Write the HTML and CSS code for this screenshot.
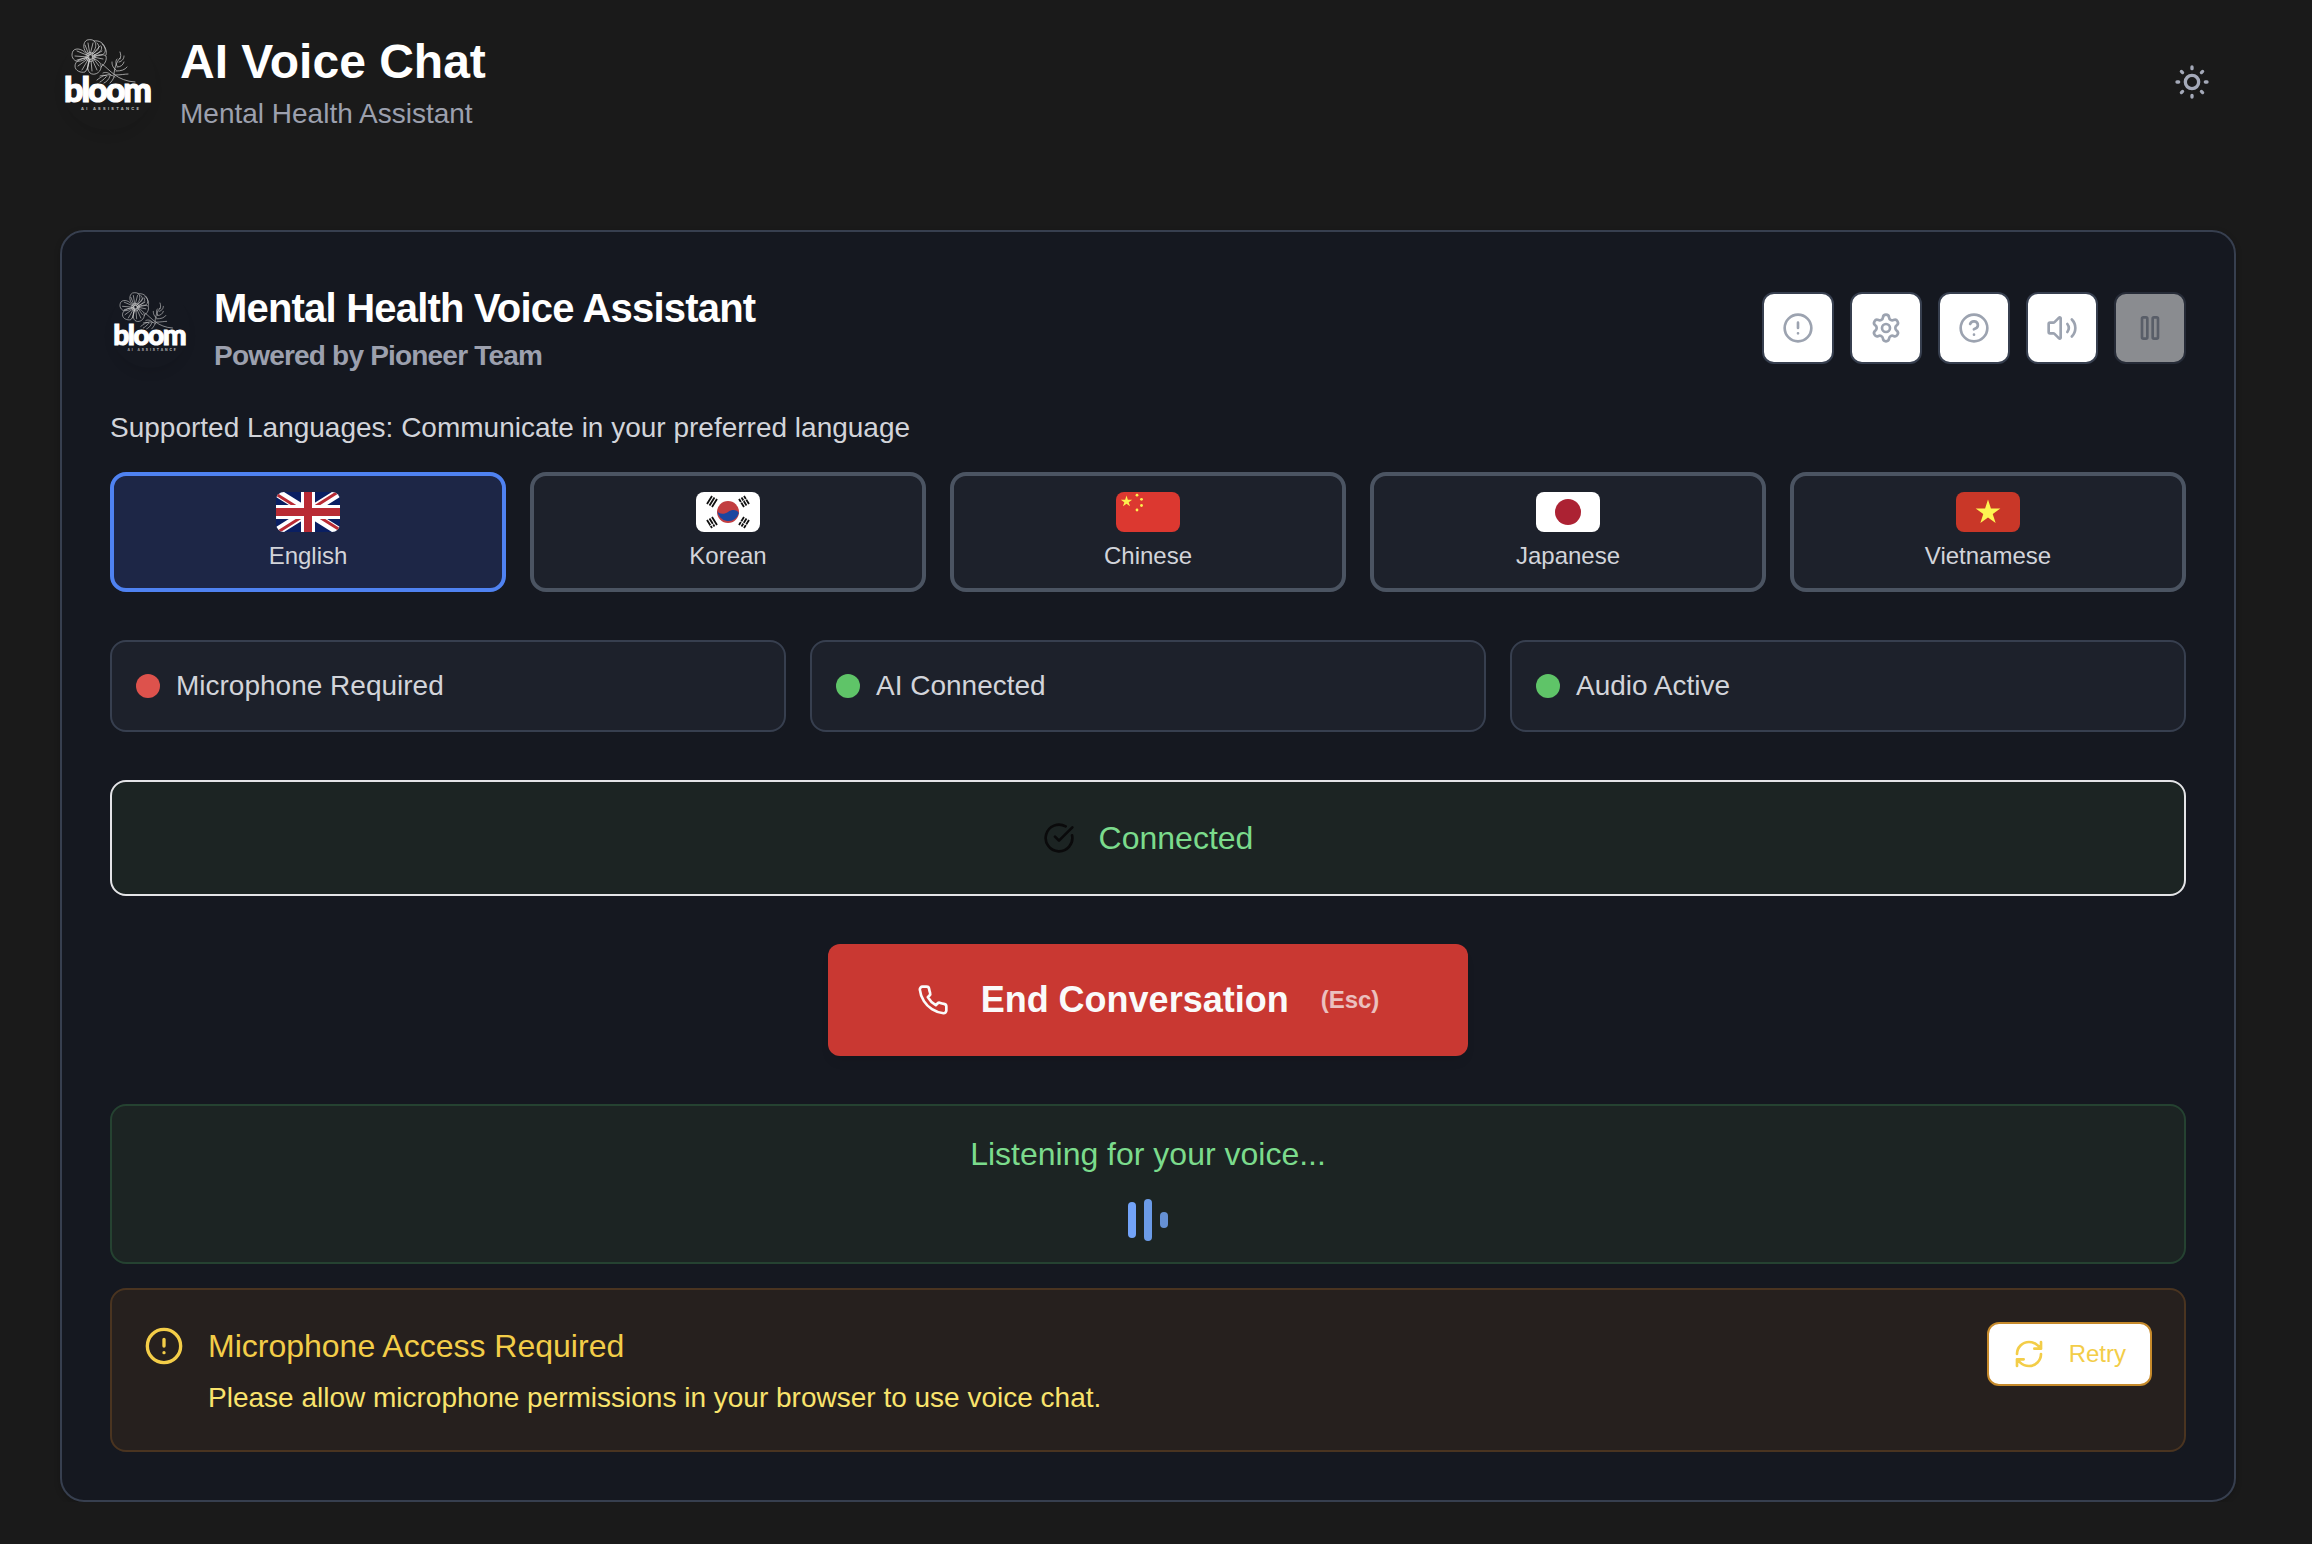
FILE: index.html
```
<!DOCTYPE html>
<html lang="en">
<head>
    <meta charset="UTF-8">
    <meta name="viewport" content="width=device-width, initial-scale=1.0">
    <title>AI Voice Chat</title>
    <link rel="stylesheet" href="styles.css">
</head>
<body>
    <!-- shared icons -->
    <svg class="defs" width="0" height="0">
        <symbol id="flower" viewBox="0 0 96 96">
            <g fill="none" stroke="#d6d6d6" stroke-width="0.7" stroke-linecap="round">
                <path d="M28 20C22 16 23 8 27 6c4-1 7 0 8 2 2 4 0 9-4 12"/>
                <path d="M34 7c5-1 10 2 11 7 1 4-1 6-3 7-4 1-8 1-10 1"/>
                <path d="M37 9c3 3 3 7-5 11M41 12c2 3 0 6-7 9M42 10c4 4 5 7 4 11"/>
                <path d="M28 22c-4-7-12-9-15-5-2 4-1 8 3 10 4 1 9-1 12-4"/>
                <path d="M28 24c-7 0-13 3-13 8 0 5 6 7 10 6 3-3 4-9 4-13"/>
                <path d="M30 25c-3 5-3 11 0 14 4 3 10 0 11-5 1-5-3-8-9-10"/>
                <path d="M34 23c4-3 9-3 12-1 1 4-1 8-5 11"/>
                <path d="M30 21L28 9M30 21l3-12M29 21l-4-10M29 22l-12-5M28 23l-13-1M28 23l-11 3M29 24l-11 8M29 24l-7 12M30 25l-3 11M31 26l1 11M32 25l5 11M33 24l6 8M32 21l8-9M33 22l9-5M33 23l10 2"/>
                <circle cx="30.500" cy="23" r="2.500"/>
                <circle cx="30.500" cy="23" r="4.500" stroke-dasharray="1 1"/>
                <path d="M42 30c8 6 15 17 33 18"/>
                <path d="M54 41c0-5 2-13 6-17M56 36c-4-3-4-6-4-8M57 32c-2-3-1-6 0-7M57 33c4 0 6-2 7-5M56 37c5 0 9-1 11-4M55 41c6 0 10-1 13-1M60 25c1-3 1-4 0-7M59 28c4-1 5-4 5-6"/>
                <path d="M55 43c-7-5-13-1-18 3M51 41c-3-3-6-3-8-2M47 42c-3-1-5-1-7 0M50 42c-1 4-4 6-6 7M54 43c-1 3-3 5-4 6M46 43c-2 2-4 4-6 5"/>
            </g>
        </symbol>
        <symbol id="alert" viewBox="0 0 24 24">
            <circle cx="12" cy="12" r="10"/><path d="M12 8v4M12 16h.01"/>
        </symbol>
    </svg>

    <header class="top-bar">
        <div class="brand">
            <svg class="logo" viewBox="0 0 96 96">
                <use href="#flower"/>
                <text class="logo-word" x="4" y="68" textLength="88">bloom</text>
                <text class="logo-tag" x="21" y="76" textLength="58">AI ASSISTANCE</text>
            </svg>
            <div class="brand-text">
                <h1>AI Voice Chat</h1>
                <p class="tagline">Mental Health Assistant</p>
            </div>
        </div>
        <svg class="icon theme-icon" viewBox="0 0 24 24"><circle cx="12" cy="12" r="4"/><path d="M12 3v1M12 20v1M3 12h1M20 12h1M18.364 5.636l-.707.707M6.343 17.657l-.707.707M5.636 5.636l.707.707M17.657 17.657l.707.707"/></svg>
    </header>

    <main class="card">
        <div class="card-header">
            <div class="brand">
                <svg class="logo small" viewBox="0 0 96 96">
                    <use href="#flower"/>
                    <text class="logo-word" x="4" y="68" textLength="88">bloom</text>
                    <text class="logo-tag" x="21" y="76" textLength="58">AI ASSISTANCE</text>
                </svg>
                <div>
                    <h2>Mental Health Voice Assistant</h2>
                    <p class="powered">Powered by Pioneer Team</p>
                </div>
            </div>
            <div class="tools">
                <button class="tool"><svg class="icon"><use href="#alert"/></svg></button>
                <button class="tool"><svg class="icon" viewBox="0 0 24 24"><path d="M9.671 4.136a2.34 2.34 0 0 1 4.659 0 2.34 2.34 0 0 0 3.319 1.915 2.34 2.34 0 0 1 2.33 4.033 2.34 2.34 0 0 0 0 3.831 2.34 2.34 0 0 1-2.33 4.033 2.34 2.34 0 0 0-3.319 1.915 2.34 2.34 0 0 1-4.659 0 2.34 2.34 0 0 0-3.32-1.915 2.34 2.34 0 0 1-2.33-4.033 2.34 2.34 0 0 0 0-3.831A2.34 2.34 0 0 1 6.35 6.051a2.34 2.34 0 0 0 3.319-1.915"/><circle cx="12" cy="12" r="3"/></svg></button>
                <button class="tool"><svg class="icon" viewBox="0 0 24 24"><circle cx="12" cy="12" r="10"/><path d="M9.090 9a3 3 0 0 1 5.830 1c0 2-3 3-3 3M12 17h.01"/></svg></button>
                <button class="tool"><svg class="icon" viewBox="0 0 24 24"><path d="M11 4.702a.705.705 0 0 0-1.203-.498L6.413 7.587A1.400 1.400 0 0 1 5.416 8H3a1 1 0 0 0-1 1v6a1 1 0 0 0 1 1h2.416a1.400 1.400 0 0 1 .997.413l3.383 3.384A.705.705 0 0 0 11 19.298z"/><path d="M16 9a5 5 0 0 1 0 6M19.364 18.364a9 9 0 0 0 0-12.728"/></svg></button>
                <button class="tool" disabled><svg class="icon" viewBox="0 0 24 24"><rect x="14" y="4" width="4" height="16" rx="1"/><rect x="6" y="4" width="4" height="16" rx="1"/></svg></button>
            </div>
        </div>

        <p class="supported">Supported Languages: Communicate in your preferred language</p>
        <div class="languages">
            <button class="language active">
                <svg class="flag" viewBox="0 0 64 40">
                    <rect width="64" height="40" fill="#0a1f62"/>
                    <path d="M0 0l64 40M64 0L0 40" stroke="#fff" stroke-width="8.500"/>
                    <path d="M0 2l27 16.900M64 38L37 21.100M62 0L36 16.500M2 40l26-16.500" stroke="#b92b34" stroke-width="3"/>
                    <path d="M32 0v40M0 20h64" stroke="#fff" stroke-width="14"/>
                    <path d="M32 0v40M0 20h64" stroke="#b92b34" stroke-width="8"/>
                </svg>
                <span>English</span>
            </button>
            <button class="language">
                <svg class="flag" viewBox="0 0 64 40">
                    <rect width="64" height="40" fill="#fff"/>
                    <circle cx="32" cy="20" r="11" fill="#c23e41"/>
                    <path d="M21.300 18.500C22 22 28 23 32 20S41 17.500 42.900 21A11 11 0 0 1 21.300 18.500z" fill="#1c46a0"/>
                    <g stroke="#111" stroke-width="1.800">
                        <path d="M11 12l5-8M13.500 13.500l5-8M16 15l5-8"/>
                        <path d="M53 12l-5-8M50.500 13.500l-5-8M48 15l-5-8"/>
                        <path d="M11 28l5 8M13.500 26.500l5 8M16 25l5 8"/>
                        <path d="M53 28l-5 8M50.500 26.500l-5 8M48 25l-5 8"/>
                    </g>
                    <path d="M44 11l4-2.500M49 8l3-2M14 34l4-2.500M44 29l8 5" stroke="#fff" stroke-width="0.900"/>
                </svg>
                <span>Korean</span>
            </button>
            <button class="language">
                <svg class="flag" viewBox="0 0 64 40">
                    <rect width="64" height="40" fill="#dc3830"/>
                    <g fill="#fdf04f">
                        <path d="M10.500 3.500l1.350 4.150h4.360l-3.530 2.560 1.350 4.150-3.530-2.560-3.530 2.560 1.350-4.150-3.530-2.560h4.360z"/>
                        <circle cx="21" cy="3.200" r="1.400"/><circle cx="25.500" cy="7.300" r="1.400"/><circle cx="25.500" cy="13.500" r="1.400"/><circle cx="21" cy="18" r="1.400"/>
                    </g>
                </svg>
                <span>Chinese</span>
            </button>
            <button class="language">
                <svg class="flag" viewBox="0 0 64 40">
                    <rect width="64" height="40" fill="#fff"/>
                    <circle cx="32" cy="20" r="13" fill="#ac2233"/>
                </svg>
                <span>Japanese</span>
            </button>
            <button class="language">
                <svg class="flag" viewBox="0 0 64 40">
                    <rect width="64" height="40" fill="#c93728"/>
                    <path d="M32 7.500l2.920 8.980h9.440l-7.640 5.550 2.920 8.980L32 25.460l-7.640 5.550 2.920-8.980-7.640-5.550h9.440z" fill="#fdf551"/>
                </svg>
                <span>Vietnamese</span>
            </button>
        </div>

        <div class="statuses">
            <div class="status"><span class="dot red"></span>Microphone Required</div>
            <div class="status"><span class="dot"></span>AI Connected</div>
            <div class="status"><span class="dot"></span>Audio Active</div>
        </div>

        <div class="connected">
            <svg class="icon" viewBox="0 0 24 24"><path d="M21.801 10A10 10 0 1 1 17 3.335M9 11l3 3L22 4"/></svg>
            <span>Connected</span>
        </div>

        <button class="end-btn">
            <svg class="icon" viewBox="0 0 24 24"><path d="M22 16.920v3a2 2 0 0 1-2.180 2 19.790 19.790 0 0 1-8.630-3.070 19.500 19.500 0 0 1-6-6 19.790 19.790 0 0 1-3.070-8.670A2 2 0 0 1 4.110 2h3a2 2 0 0 1 2 1.720 12.840 12.840 0 0 0 .7 2.810 2 2 0 0 1-.45 2.110L8.090 9.910a16 16 0 0 0 6 6l1.270-1.270a2 2 0 0 1 2.110-.45 12.840 12.840 0 0 0 2.810.7A2 2 0 0 1 22 16.920z"/></svg>
            <span>End Conversation</span>
            <span class="key">(Esc)</span>
        </button>

        <div class="listening">
            <p>Listening for your voice...</p>
            <div class="bars">
                <span class="bar one"></span>
                <span class="bar two"></span>
                <span class="bar three"></span>
            </div>
        </div>

        <div class="warning">
            <svg class="icon warning-icon"><use href="#alert"/></svg>
            <div class="warning-text">
                <h3>Microphone Access Required</h3>
                <p>Please allow microphone permissions in your browser to use voice chat.</p>
            </div>
            <button class="retry">
                <svg class="icon" viewBox="0 0 24 24"><path d="M3 12a9 9 0 0 1 9-9 9.750 9.750 0 0 1 6.740 2.740L21 8M21 3v5h-5M21 12a9 9 0 0 1-9 9 9.750 9.750 0 0 1-6.740-2.740L3 16M8 16H3v5"/></svg>
                <span>Retry</span>
            </button>
        </div>
    </main>
</body>
</html>
```
FILE: styles.css
```
* {
    box-sizing: border-box;
}
body {
    margin: 0;
    background: #1a1a1a;
    color: #d2d4da;
    font-family: "Liberation Sans", Arial, sans-serif;
}
h1, h2, h3, p {
    margin: 0;
}
button {
    font-family: inherit;
    cursor: pointer;
}
.defs {
    position: absolute;
}
.icon {
    width: 32px;
    height: 32px;
    flex: none;
    fill: none;
    stroke: currentColor;
    stroke-width: 2;
    stroke-linecap: round;
    stroke-linejoin: round;
}

/* header */
.top-bar {
    height: 164px;
    padding: 0 100px 0 60px;
    display: flex;
    justify-content: space-between;
    align-items: center;
}
.brand {
    display: flex;
    align-items: center;
    gap: 24px;
}
.brand-text {
    padding-top: 2px;
}
.logo {
    width: 96px;
    height: 96px;
    border-radius: 50%;
    box-shadow: 0 8px 12px -4px rgba(0, 0, 0, 0.1);
    overflow: visible;
}
.logo.small {
    width: 80px;
    height: 80px;
}
.logo-word {
    font-family: Lato, sans-serif;
    font-size: 34px;
    font-weight: 900;
    fill: #fff;
    stroke: #fff;
    stroke-width: 1.2;
}
.logo-tag {
    font-family: Inter, sans-serif;
    font-size: 4px;
    font-weight: 600;
    fill: #ccc;
}
h1 {
    color: #fff;
    font-size: 48px;
    line-height: 62px;
}
.tagline {
    color: #9ca0ae;
    font-size: 28px;
    line-height: 42px;
}
.theme-icon {
    width: 40px;
    height: 40px;
    color: #a4a9b8;
}

/* card */
.card {
    margin: 66px 76px 0 60px;
    padding: 48px;
    background: #151820;
    border: 2px solid #373f4f;
    border-radius: 24px;
    box-shadow: 0 2px 6px rgba(0, 0, 0, 0.2);
}
.card-header {
    display: flex;
    justify-content: space-between;
    align-items: center;
}
h2 {
    color: #fff;
    font-size: 40px;
    line-height: 56px;
    letter-spacing: -0.8px;
}
.powered {
    color: #9ca0ae;
    font-size: 28px;
    font-weight: bold;
    line-height: 40px;
    letter-spacing: -0.8px;
}
.tools {
    display: flex;
    gap: 16px;
}
.tool {
    width: 72px;
    height: 72px;
    padding: 0;
    display: flex;
    align-items: center;
    justify-content: center;
    background: #fff;
    border: 2px solid #373f4f;
    border-radius: 12px;
    color: #9ca3b0;
}
.tool:disabled {
    opacity: 0.5;
}
.supported {
    margin: 32px 0 24px;
    font-size: 28px;
    line-height: 40px;
}

/* languages */
.languages {
    display: grid;
    grid-template-columns: repeat(5, 1fr);
    gap: 24px;
}
.language {
    height: 120px;
    padding: 16px;
    display: flex;
    flex-direction: column;
    align-items: center;
    gap: 8px;
    background: #1d212b;
    border: 4px solid #4b5462;
    border-radius: 16px;
    color: #d2d4da;
    font-size: 24px;
    line-height: 32px;
}
.language.active {
    background: #1d2646;
    border-color: #4f82f1;
}
.flag {
    width: 64px;
    height: 40px;
    border-radius: 8px;
}

/* status */
.statuses {
    margin-top: 48px;
    display: grid;
    grid-template-columns: repeat(3, 1fr);
    gap: 24px;
}
.status {
    height: 92px;
    padding: 0 24px;
    display: flex;
    align-items: center;
    gap: 16px;
    background: #1d212b;
    border: 2px solid #373f4f;
    border-radius: 16px;
    font-size: 28px;
}
.dot {
    width: 24px;
    height: 24px;
    border-radius: 50%;
    background: #5fc468;
}
.dot.red {
    background: #dd524c;
}
.connected {
    margin: 48px 0;
    padding: 32px;
    display: flex;
    align-items: center;
    justify-content: center;
    gap: 24px;
    background: #1c2423;
    border: 2px solid #e4e4e7;
    border-radius: 16px;
    color: #7bdb8c;
    font-size: 32px;
    line-height: 48px;
}
.connected .icon {
    color: #0a0a0b;
}
.end-btn {
    width: 640px;
    height: 112px;
    margin: 0 auto 48px;
    display: flex;
    align-items: center;
    justify-content: center;
    gap: 32px;
    background: #c93832;
    border: none;
    border-radius: 12px;
    color: #fafafa;
    font-size: 36px;
    font-weight: bold;
    box-shadow: 0 8px 12px -4px rgba(0, 0, 0, 0.1);
}
.key {
    font-size: 24px;
    opacity: 0.7;
}
.listening {
    padding: 24px;
    background: #1c2423;
    border: 2px solid #254231;
    border-radius: 16px;
    color: #7bdb8c;
    font-size: 32px;
    line-height: 48px;
    text-align: center;
}
.bars {
    height: 36px;
    margin-top: 24px;
    display: flex;
    align-items: center;
    justify-content: center;
    gap: 8px;
}
.bar {
    width: 8px;
    flex: none;
    border-radius: 4px;
}
.bar.one {
    height: 36px;
    background: #72a3f8;
}
.bar.two {
    height: 42px;
    background: #6b9be8;
}
.bar.three {
    height: 16px;
    background: #6590d3;
}

/* warning */
.warning {
    margin-top: 24px;
    padding: 32px;
    display: flex;
    align-items: flex-start;
    gap: 24px;
    background: #26201e;
    border: 2px solid #4a3420;
    border-radius: 16px;
}
.warning-icon {
    width: 40px;
    height: 40px;
    margin-top: 4px;
    color: #f3cd48;
}
.warning-text {
    flex: 1;
}
.warning h3 {
    color: #f3cd48;
    font-size: 32px;
    font-weight: normal;
    line-height: 48px;
}
.warning p {
    margin-top: 8px;
    color: #f9e36c;
    font-size: 28px;
    line-height: 40px;
}
.retry {
    height: 64px;
    padding: 0 24px;
    display: flex;
    align-items: center;
    gap: 24px;
    background: #fff;
    border: 2px solid #c68a2b;
    border-radius: 12px;
    color: #f3cd48;
    font-size: 24px;
}
```
